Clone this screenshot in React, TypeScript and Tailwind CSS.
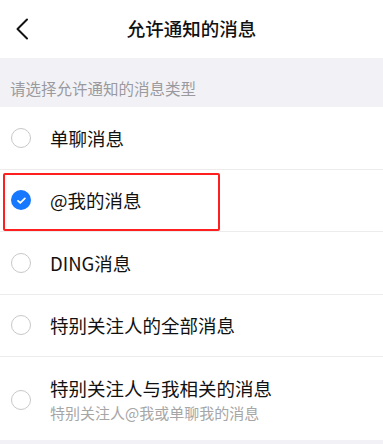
import React, { useState } from 'react';

const options = [
  { id: 'single', label: '单聊消息' },
  { id: 'at', label: '@我的消息' },
  { id: 'ding', label: 'DING消息' },
  { id: 'special-all', label: '特别关注人的全部消息' },
  { id: 'special-me', label: '特别关注人与我相关的消息', hint: '特别关注人@我或单聊我的消息' },
];

const font = "font-['Noto_Sans_CJK_SC','Noto_Sans',sans-serif]";

function Radio({ checked }: { checked: boolean }) {
  if (checked) {
    return (
      <span className="flex h-[20px] w-[20px] items-center justify-center rounded-full bg-[#1677ff]">
        <svg width="11" height="11" viewBox="0 0 12 12" fill="none">
          <path d="M2.2 6.3l2.5 2.4 5-5" stroke="#fff" strokeWidth="1.9" strokeLinecap="round" strokeLinejoin="round" />
        </svg>
      </span>
    );
  }
  return <span className="block h-[20px] w-[20px] rounded-full border-[1.5px] border-[#c8c8c8]" />;
}

export default function App() {
  const [selected, setSelected] = useState('at');

  return (
    <div className={`h-[444px] w-[383px] overflow-hidden bg-[#f2f2f6] ${font}`}>
      {/* Header */}
      <div className="flex h-[58px] items-center bg-white">
        <button className="flex h-full w-[44px] items-center pl-[15px]">
          <svg width="14" height="22" viewBox="0 0 14 22" fill="none">
            <path d="M12 1.5L2.5 11l9.5 9.5" stroke="#111" strokeWidth="2" strokeLinecap="round" strokeLinejoin="round" />
          </svg>
        </button>
        <h1 className="flex-1 pr-[44px] text-center text-[18.5px] font-medium text-[#111]">允许通知的消息</h1>
      </div>

      <div className="flex h-[49px] items-end pb-[7px] pl-[10px] text-[15.5px] text-[#9a9a9e]">
        请选择允许通知的消息类型
      </div>

      <div className="bg-white">
        {options.map((o, i) => (
          <div
            key={o.id}
            onClick={() => setSelected(o.id)}
            className={`relative flex items-center ${o.hint ? 'h-[83px] pt-[2px]' : 'h-[62.5px]'} ${
              i < options.length - 1 ? 'border-b border-[#ececec]' : ''
            }`}
          >
            <div className="flex w-[50px] justify-center pr-[8px]">
              <Radio checked={selected === o.id} />
            </div>
            <div className="flex flex-col">
              <span className="text-[18.5px] leading-[24px] text-[#111]">{o.label}</span>
              {o.hint && <span className="mt-[3px] text-[15px] leading-[20px] text-[#a6a6a6]">{o.hint}</span>}
            </div>
            {o.id === 'at' && (
              <div className="pointer-events-none absolute left-[3px] top-[3px] h-[58px] w-[217px] rounded-[2px] border-[2.5px] border-[#ff1f1f]" />
            )}
          </div>
        ))}
      </div>
    </div>
  );
}
